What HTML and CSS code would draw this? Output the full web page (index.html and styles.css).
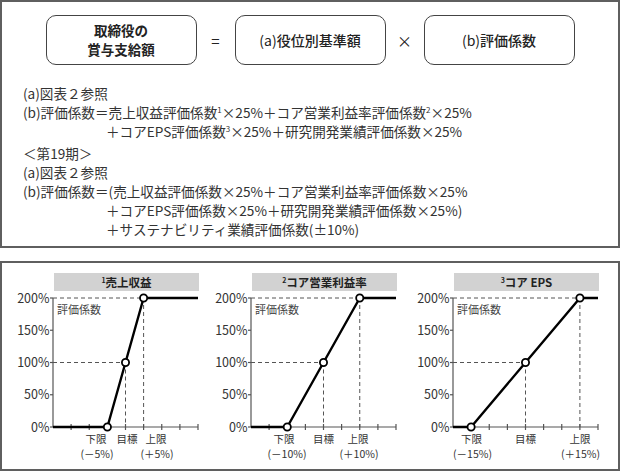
FILE: index.html
```html
<!DOCTYPE html>
<html lang="ja">
<head>
<meta charset="utf-8">
<title>取締役の賞与支給額</title>
<link rel="stylesheet" href="styles.css">
</head>
<body>
<div class="page">
  <section class="panel formula-panel">
    <div class="formula">
      <div class="fbox fbox-main"><span class="fline">取締役の</span><span class="fline">賞与支給額</span></div>
      <div class="op">=</div>
      <div class="fbox"><span class="lat">(a)</span><span class="jp">役位別基準額</span></div>
      <div class="op">×</div>
      <div class="fbox"><span class="lat">(b)</span><span class="jp">評価係数</span></div>
    </div>
    <div class="notes">
      <p class="line">(a)図表２参照</p>
      <p class="line">(b)評価係数＝売上収益評価係数<sup>1</sup>×25%＋コア営業利益率評価係数<sup>2</sup>×25%</p>
      <p class="line cont">＋コアEPS評価係数<sup>3</sup>×25%＋研究開発業績評価係数×25%</p>
      <p class="line gap">＜第19期＞</p>
      <p class="line">(a)図表２参照</p>
      <p class="line">(b)評価係数＝(売上収益評価係数×25%＋コア営業利益率評価係数×25%</p>
      <p class="line cont">＋コアEPS評価係数×25%＋研究開発業績評価係数×25%)</p>
      <p class="line cont">＋サステナビリティ業績評価係数(±10%)</p>
    </div>
  </section>

  <section class="panel chart-panel">
    <!-- Chart 1 -->
    <svg class="chart" width="198" height="206" viewBox="0 0 198 206">
      <rect class="title-bar" x="51" y="10" width="145" height="18"/>
      <text class="title" x="123.5" y="23.5" text-anchor="middle"><tspan class="sup" dy="-4">1</tspan><tspan dy="4">売上収益</tspan></text>
      <g class="guide">
        <line x1="50" y1="35" x2="140.6" y2="35"/>
        <line x1="50" y1="99.5" x2="122.5" y2="99.5"/>
        <line x1="122.5" y1="99.5" x2="122.5" y2="164"/>
        <line x1="140.6" y1="35" x2="140.6" y2="164"/>
      </g>
      <g class="axis">
        <line x1="50" y1="35" x2="50" y2="164"/>
        <line x1="50" y1="164" x2="195" y2="164"/>
        <line x1="47" y1="35" x2="50" y2="35"/>
        <line x1="47" y1="67.25" x2="50" y2="67.25"/>
        <line x1="47" y1="99.5" x2="50" y2="99.5"/>
        <line x1="47" y1="131.75" x2="50" y2="131.75"/>
        <line x1="47" y1="164" x2="50" y2="164"/>
        <line x1="68.1" y1="161" x2="68.1" y2="167"/>
        <line x1="86.25" y1="161" x2="86.25" y2="167"/>
        <line x1="104.4" y1="161" x2="104.4" y2="167"/>
        <line x1="122.5" y1="161" x2="122.5" y2="167"/>
        <line x1="140.6" y1="161" x2="140.6" y2="167"/>
        <line x1="158.75" y1="161" x2="158.75" y2="167"/>
        <line x1="176.9" y1="161" x2="176.9" y2="167"/>
        <line x1="195" y1="161" x2="195" y2="167"/>
      </g>
      <g class="ylabels">
        <text x="46.5" y="39.5">200%</text>
        <text x="46.5" y="71.75">150%</text>
        <text x="46.5" y="104">100%</text>
        <text x="46.5" y="136.25">50%</text>
        <text x="46.5" y="168.5">0%</text>
      </g>
      <text class="axis-name" x="54" y="50.5">評価係数</text>
      <polyline class="curve" points="50,164 104.4,164 122.5,99.5 140.6,35 195,35"/>
      <circle class="pt" cx="104.4" cy="164" r="3.6"/>
      <circle class="pt" cx="122.5" cy="99.5" r="3.6"/>
      <circle class="pt" cx="140.6" cy="35" r="3.6"/>
      <g class="xlabels">
        <text x="93" y="179.7">下限</text>
        <text x="94" y="194.7">(－5%)</text>
        <text x="124" y="179.7">目標</text>
        <text x="153" y="179.7">上限</text>
        <text x="154" y="194.7">(＋5%)</text>
      </g>
    </svg>

    <!-- Chart 2 -->
    <svg class="chart" width="198" height="206" viewBox="0 0 198 206">
      <g transform="translate(-2 0)">
        <rect class="title-bar" x="51" y="10" width="145" height="18"/>
        <text class="title" x="123.5" y="23.5" text-anchor="middle"><tspan class="sup" dy="-4">2</tspan><tspan dy="4">コア営業利益率</tspan></text>
        <g class="guide">
          <line x1="50" y1="35" x2="158.75" y2="35"/>
          <line x1="50" y1="99.5" x2="122.5" y2="99.5"/>
          <line x1="122.5" y1="99.5" x2="122.5" y2="164"/>
          <line x1="158.75" y1="35" x2="158.75" y2="164"/>
        </g>
        <g class="axis">
          <line x1="50" y1="35" x2="50" y2="164"/>
          <line x1="50" y1="164" x2="195" y2="164"/>
          <line x1="47" y1="35" x2="50" y2="35"/>
          <line x1="47" y1="67.25" x2="50" y2="67.25"/>
          <line x1="47" y1="99.5" x2="50" y2="99.5"/>
          <line x1="47" y1="131.75" x2="50" y2="131.75"/>
          <line x1="47" y1="164" x2="50" y2="164"/>
          <line x1="68.1" y1="161" x2="68.1" y2="167"/>
          <line x1="86.25" y1="161" x2="86.25" y2="167"/>
          <line x1="104.4" y1="161" x2="104.4" y2="167"/>
          <line x1="122.5" y1="161" x2="122.5" y2="167"/>
          <line x1="140.6" y1="161" x2="140.6" y2="167"/>
          <line x1="158.75" y1="161" x2="158.75" y2="167"/>
          <line x1="176.9" y1="161" x2="176.9" y2="167"/>
          <line x1="195" y1="161" x2="195" y2="167"/>
        </g>
        <g class="ylabels">
          <text x="46.5" y="39.5">200%</text>
          <text x="46.5" y="71.75">150%</text>
          <text x="46.5" y="104">100%</text>
          <text x="46.5" y="136.25">50%</text>
          <text x="46.5" y="168.5">0%</text>
        </g>
        <text class="axis-name" x="54" y="50.5">評価係数</text>
        <polyline class="curve" points="50,164 86.25,164 122.5,99.5 158.75,35 195,35"/>
        <circle class="pt" cx="86.25" cy="164" r="3.6"/>
        <circle class="pt" cx="122.5" cy="99.5" r="3.6"/>
        <circle class="pt" cx="158.75" cy="35" r="3.6"/>
        <g class="xlabels">
          <text x="83" y="179.7">下限</text>
          <text x="86" y="194.7">(－10%)</text>
          <text x="122.5" y="179.7">目標</text>
          <text x="157" y="179.7">上限</text>
          <text x="158" y="194.7">(＋10%)</text>
        </g>
      </g>
    </svg>

    <!-- Chart 3 -->
    <svg class="chart" width="198" height="206" viewBox="0 0 198 206">
      <rect class="title-bar" x="51" y="10" width="145" height="18"/>
      <text class="title" x="123.5" y="23.5" text-anchor="middle"><tspan class="sup" dy="-4">3</tspan><tspan dy="4">コア EPS</tspan></text>
      <g class="guide">
        <line x1="50" y1="35" x2="176.9" y2="35"/>
        <line x1="50" y1="99.5" x2="122.5" y2="99.5"/>
        <line x1="122.5" y1="99.5" x2="122.5" y2="164"/>
        <line x1="176.9" y1="35" x2="176.9" y2="164"/>
      </g>
      <g class="axis">
        <line x1="50" y1="35" x2="50" y2="164"/>
        <line x1="50" y1="164" x2="195" y2="164"/>
        <line x1="47" y1="35" x2="50" y2="35"/>
        <line x1="47" y1="67.25" x2="50" y2="67.25"/>
        <line x1="47" y1="99.5" x2="50" y2="99.5"/>
        <line x1="47" y1="131.75" x2="50" y2="131.75"/>
        <line x1="47" y1="164" x2="50" y2="164"/>
        <line x1="68.1" y1="161" x2="68.1" y2="167"/>
        <line x1="86.25" y1="161" x2="86.25" y2="167"/>
        <line x1="104.4" y1="161" x2="104.4" y2="167"/>
        <line x1="122.5" y1="161" x2="122.5" y2="167"/>
        <line x1="140.6" y1="161" x2="140.6" y2="167"/>
        <line x1="158.75" y1="161" x2="158.75" y2="167"/>
        <line x1="176.9" y1="161" x2="176.9" y2="167"/>
        <line x1="195" y1="161" x2="195" y2="167"/>
      </g>
      <g class="ylabels">
        <text x="46.5" y="39.5">200%</text>
        <text x="46.5" y="71.75">150%</text>
        <text x="46.5" y="104">100%</text>
        <text x="46.5" y="136.25">50%</text>
        <text x="46.5" y="168.5">0%</text>
      </g>
      <text class="axis-name" x="54" y="50.5">評価係数</text>
      <polyline class="curve" points="50,164 68.1,164 122.5,99.5 176.9,35 195,35"/>
      <circle class="pt" cx="68.1" cy="164" r="3.6"/>
      <circle class="pt" cx="122.5" cy="99.5" r="3.6"/>
      <circle class="pt" cx="176.9" cy="35" r="3.6"/>
      <g class="xlabels">
        <text x="68.5" y="179.7">下限</text>
        <text x="69.5" y="194.7">(－15%)</text>
        <text x="122.5" y="179.7">目標</text>
        <text x="177" y="179.7">上限</text>
        <text x="177.5" y="194.7">(＋15%)</text>
      </g>
    </svg>
  </section>
</div>
</body>
</html>
```

FILE: styles.css
```css
* {
  box-sizing: border-box;
  margin: 0;
  padding: 0;
}

html,
body {
  background: #ffffff;
}

body {
  margin: 0;
  font-family: "Noto Sans CJK JP", "Noto Sans", sans-serif;
  color: #333333;
}

.page {
  width: 621px;
}

.panel {
  width: 620px;
  border: 2px solid #5f5f5f;
}

/* ---------- formula panel ---------- */
.formula-panel {
  height: 248px;
  padding-top: 13px;
}

.formula {
  display: flex;
  justify-content: center;
  align-items: center;
}

.fbox {
  width: 151px;
  height: 50px;
  border: 1px solid #444444;
  border-radius: 10px;
  display: flex;
  align-items: center;
  justify-content: center;
  text-align: center;
  font-size: 14px;
  line-height: 18px;
  color: #222222;
}

.fbox-main {
  flex-direction: column;
  gap: 0;
  font-weight: 700;
  font-size: 13.5px;
  line-height: 19px;
}

.fline {
  display: block;
}

.fbox .jp {
  font-weight: 500;
}

.fbox .lat {
  font-weight: 400;
}

.op {
  width: 38px;
  text-align: center;
  font-size: 15px;
  color: #222222;
}

.notes {
  margin-top: 19px;
  padding-left: 21px;
  font-size: 13.6px;
  line-height: 19px;
  color: #333333;
}

.line {
  white-space: nowrap;
}

.line.cont {
  padding-left: 83px;
}

.line.gap {
  margin-top: 3px;
}

.line sup {
  font-size: 8px;
  line-height: 0;
  vertical-align: 5px;
}

/* ---------- chart panel ---------- */
.chart-panel {
  margin-top: 13px;
  height: 210px;
  display: flex;
  gap: 2px;
  padding-left: 1px;
}

.chart {
  display: block;
  flex: none;
  font-family: "Noto Sans CJK JP", "Noto Sans", sans-serif;
}

.title-bar {
  fill: #d2d2d2;
}

.title {
  font-size: 11.5px;
  font-weight: 700;
  fill: #222222;
}

.title .sup {
  font-size: 7px;
}

.guide line {
  stroke: #555555;
  stroke-width: 1;
  stroke-dasharray: 4 3;
}

.axis line {
  stroke: #555555;
  stroke-width: 1.2;
}

.ylabels text {
  font-size: 12.5px;
  fill: #333333;
  text-anchor: end;
}

.axis-name {
  font-size: 11px;
  fill: #444444;
}

.curve {
  fill: none;
  stroke: #000000;
  stroke-width: 2.4;
  stroke-linejoin: round;
}

.pt {
  fill: #ffffff;
  stroke: #000000;
  stroke-width: 1.8;
}

.xlabels text {
  font-size: 10.5px;
  fill: #333333;
  text-anchor: middle;
}
```
